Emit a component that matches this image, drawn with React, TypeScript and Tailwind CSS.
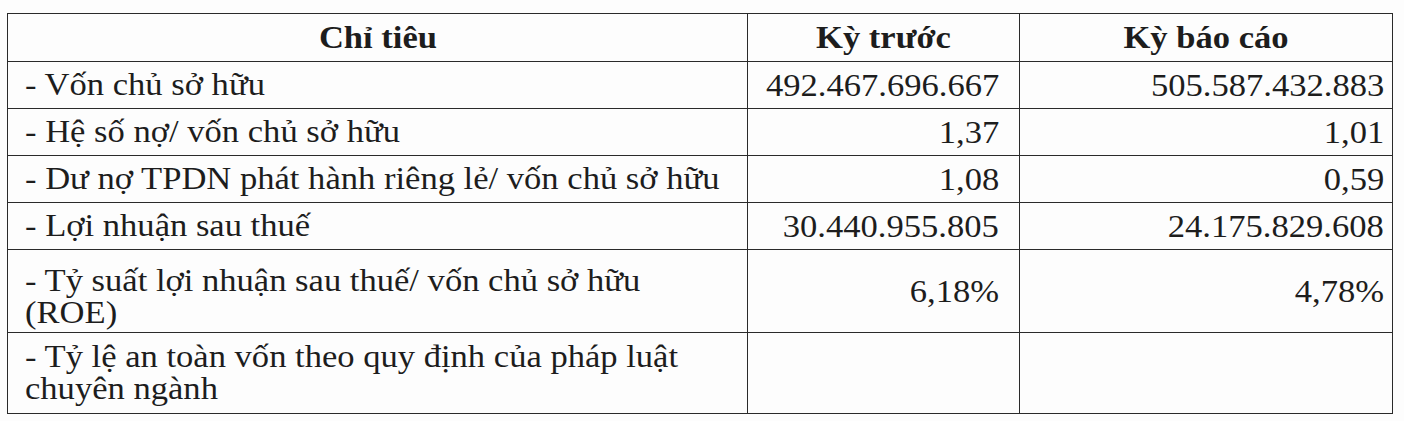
const rows = [
  { label: ["- Vốn chủ sở hữu"], prev: "492.467.696.667", cur: "505.587.432.883", h: "h-[47px]", cell: "align-middle" },
  { label: ["- Hệ số nợ/ vốn chủ sở hữu"], prev: "1,37", cur: "1,01", h: "h-[47px]", cell: "align-middle" },
  { label: ["- Dư nợ TPDN phát hành riêng lẻ/ vốn chủ sở hữu"], prev: "1,08", cur: "0,59", h: "h-[47px]", cell: "align-middle" },
  { label: ["- Lợi nhuận sau thuế"], prev: "30.440.955.805", cur: "24.175.829.608", h: "h-[47px]", cell: "align-middle" },
  { label: ["- Tỷ suất lợi nhuận sau thuế/ vốn chủ sở hữu", "(ROE)"], prev: "6,18%", cur: "4,78%", h: "h-[83px]", cell: "align-bottom pb-[3px]" },
  { label: ["- Tỷ lệ an toàn vốn theo quy định của pháp luật", "chuyên ngành"], prev: "", cur: "", h: "h-[81px]", cell: "align-middle" },
]

export default function App() {
  return (
    <div className="h-[421px] w-[1404px] bg-[#fdfdfd] pl-[7px] pt-[13px] text-[#1d1d1d] font-['Liberation_Serif','Times_New_Roman',serif] text-[31px] leading-[32px]">
      <table className="w-[1385px] table-fixed border-collapse">
        <colgroup>
          <col className="w-[740px]" />
          <col className="w-[272px]" />
          <col className="w-[373px]" />
        </colgroup>
        <thead>
          <tr className="h-[48px]">
            <th className="border border-[#2a2a2a] text-center align-middle font-bold">
              <span className="inline-block origin-center scale-x-[1.115]">Chỉ tiêu</span>
            </th>
            <th className="border border-[#2a2a2a] text-center align-middle font-bold">
              <span className="inline-block origin-center scale-x-[1.115]">Kỳ trước</span>
            </th>
            <th className="border border-[#2a2a2a] text-center align-middle font-bold">
              <span className="inline-block origin-center scale-x-[1.115]">Kỳ báo cáo</span>
            </th>
          </tr>
        </thead>
        <tbody>
          {rows.map((r, i) => (
            <tr key={i} className={r.h}>
              <td className={`border border-[#2a2a2a] pl-[17px] text-left ${r.cell}`}>
                <div className="origin-left scale-x-[1.115] whitespace-nowrap">
                  {r.label.map((l, j) => (
                    <div key={j}>{l}</div>
                  ))}
                </div>
              </td>
              <td className="border border-[#2a2a2a] pr-[20px] pt-[2px] text-right align-middle">
                <span className="inline-block origin-right scale-x-[1.115]">{r.prev}</span>
              </td>
              <td className="border border-[#2a2a2a] pr-[8px] pt-[2px] text-right align-middle">
                <span className="inline-block origin-right scale-x-[1.115]">{r.cur}</span>
              </td>
            </tr>
          ))}
        </tbody>
      </table>
    </div>
  )
}
